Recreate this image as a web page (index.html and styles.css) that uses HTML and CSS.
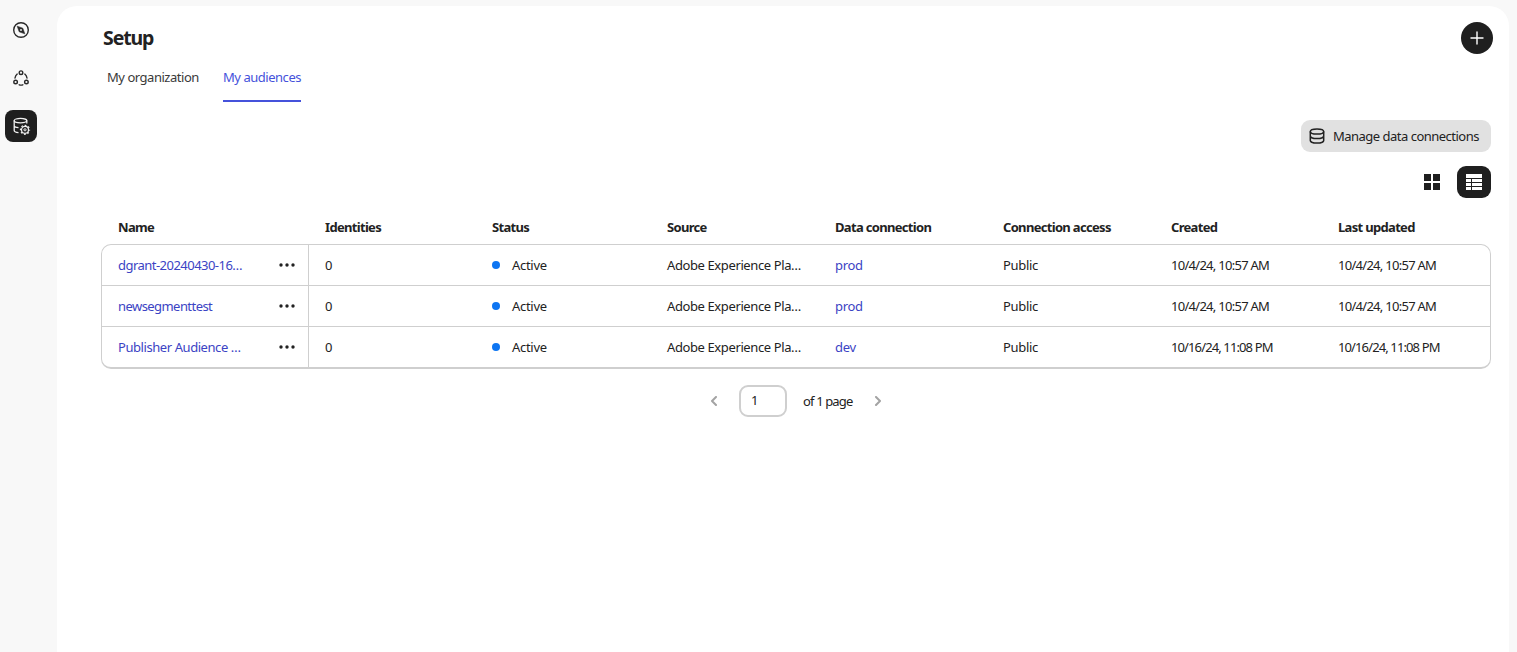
FILE: index.html
```html
<!DOCTYPE html>
<html lang="en">
<head>
<meta charset="utf-8">
<title>Setup</title>
<link rel="stylesheet" href="styles.css">
</head>
<body>
<div class="app">
  <nav class="rail">
    <a class="rail-item"><svg width="18" height="18" viewBox="0 0 18 18" fill="none" stroke="#292929" stroke-width="1.4"><circle cx="9" cy="9" r="7.3"/><path d="M5.2 5.2l5.6 2 2 5.6-5.6-2z" fill="#292929" stroke-width=".6" stroke-linejoin="round"/><circle cx="9" cy="9" r=".9" fill="#f8f8f8" stroke="none"/></svg></a>
    <a class="rail-item"><svg width="18" height="18" viewBox="0 0 18 18" fill="none" stroke="#292929" stroke-width="1.4" stroke-linecap="round"><circle cx="9" cy="3.7" r="1.8"/><circle cx="3.6" cy="13" r="1.8"/><circle cx="14.4" cy="13" r="1.8"/><path d="M5.2 5.1Q3.4 6.7 3 9M12.8 5.1Q14.6 6.7 15 9M7.2 15.8Q9 16.4 10.8 15.8"/></svg></a>
    <a class="rail-item rail-active"><svg width="20" height="20" viewBox="0 0 20 20" fill="none" stroke="#f0f0f0" stroke-width="1.3"><ellipse cx="9.500" cy="4.600" rx="6.300" ry="2.200"/><path d="M3.200 4.600v10c0 1.100 1.800 1.900 4.300 2.100M15.800 4.600V7.500M3.200 9.500c0 1.200 1.800 2 4.300 2.100"/><circle cx="14" cy="13.800" r="3.500" stroke-width="1.200"/><circle cx="14" cy="13.800" r="4.500" stroke-width="1.300" stroke-dasharray="1.730 1.804" stroke-dashoffset=".865"/><circle cx="14" cy="13.800" r="1.100" stroke-width="1"/></svg></a>
  </nav>
  <main class="panel">
    <header class="head">
      <h1 class="title">Setup</h1>
      <button class="add"><svg width="14" height="14" viewBox="0 0 14 14" stroke="#fff" stroke-width="1.4" stroke-linecap="round"><path d="M7 1v12M1 7h12"/></svg></button>
    </header>
    <div class="tabs"><a class="tab tab-org">My organization</a><a class="tab tab-active">My audiences</a></div>
    <div class="actions"><button class="manage"><svg width="16" height="16" viewBox="0 0 16 16" fill="none" stroke="#222" stroke-width="1.5"><ellipse cx="8" cy="3.5" rx="6.7" ry="2.6"/><path d="M1.3 3.5v9c0 1.4 3 2.6 6.7 2.6s6.7-1.2 6.7-2.6v-9M1.3 8c0 1.4 3 2.6 6.7 2.6S14.7 9.400 14.700 8"/></svg><span>Manage data connections</span></button></div>
    <div class="views">
      <button class="view"><svg width="16" height="16" fill="#1f1f1f"><path d="M0 0h7v7H0zM9 0h7v7H9zM0 9h7v7H0zM9 9h7v7H9z"/></svg></button>
      <button class="view view-active"><svg width="16" height="16" fill="#fff"><path d="M0 0h16v4H0zM0 5h5v3H0zM6 5h10v3H6zM0 9h5v3H0zM6 9h10v3H6zM0 13h5v3H0zM6 13h10v3H6z"/></svg></button>
    </div>
    <section class="table">
      <div class="row labels"><div class="c">Name</div><div class="c">Identities</div><div class="c">Status</div><div class="c">Source</div><div class="c">Data connection</div><div class="c">Connection access</div><div class="c">Created</div><div class="c">Last updated</div></div>
      <div class="body">
        <div class="row"><div class="c name"><a class="link dg">dgrant-20240430-16…</a><svg class="more" width="16" height="4"><circle cx="2" cy="2" r="1.7"/><circle cx="8" cy="2" r="1.7"/><circle cx="14" cy="2" r="1.7"/></svg></div><div class="c">0</div><div class="c status"><i class="dot"></i>Active</div><div class="c source">Adobe Experience Pla…</div><div class="c"><a class="link">prod</a></div><div class="c">Public</div><div class="c date">10/4/24, 10:57 AM</div><div class="c date">10/4/24, 10:57 AM</div></div>
        <div class="row"><div class="c name"><a class="link ns">newsegmenttest</a><svg class="more" width="16" height="4"><circle cx="2" cy="2" r="1.7"/><circle cx="8" cy="2" r="1.7"/><circle cx="14" cy="2" r="1.7"/></svg></div><div class="c">0</div><div class="c status"><i class="dot"></i>Active</div><div class="c source">Adobe Experience Pla…</div><div class="c"><a class="link">prod</a></div><div class="c">Public</div><div class="c date">10/4/24, 10:57 AM</div><div class="c date">10/4/24, 10:57 AM</div></div>
        <div class="row"><div class="c name"><a class="link pa">Publisher Audience …</a><svg class="more" width="16" height="4"><circle cx="2" cy="2" r="1.7"/><circle cx="8" cy="2" r="1.7"/><circle cx="14" cy="2" r="1.7"/></svg></div><div class="c">0</div><div class="c status"><i class="dot"></i>Active</div><div class="c source">Adobe Experience Pla…</div><div class="c"><a class="link">dev</a></div><div class="c">Public</div><div class="c date long">10/16/24, 11:08 PM</div><div class="c date long">10/16/24, 11:08 PM</div></div>
      </div>
    </section>
    <div class="pager"><svg width="8" height="10" viewBox="0 0 8 10" fill="none" stroke="#a3a3a3" stroke-width="2" stroke-linecap="round" stroke-linejoin="round"><path d="M6 1L2 5l4 4"/></svg><div class="page">1</div><span class="of">of 1 page</span><svg width="8" height="10" viewBox="0 0 8 10" fill="none" stroke="#a3a3a3" stroke-width="2" stroke-linecap="round" stroke-linejoin="round"><path d="M2 1l4 4-4 4"/></svg></div>
  </main>
</div>
</body>
</html>
```
FILE: styles.css
```css
* { box-sizing: border-box; }
body { margin: 0; background: #f8f8f8; color: #222; font: 13px/18px "Noto Sans", sans-serif; letter-spacing: -.3px; overflow: hidden; }
button { font: inherit; letter-spacing: inherit; color: inherit; border: 0; padding: 0; background: none; display: flex; align-items: center; justify-content: center; }
svg { display: block; flex: none; }
.app { display: flex; height: 652px; padding: 6px 8px 0 5px; }
.rail { width: 52px; padding-top: 8px; display: flex; flex-direction: column; gap: 16px; flex: none; }
.rail-item { width: 32px; height: 32px; border-radius: 8px; display: flex; align-items: center; justify-content: center; }
.rail-active { background: #1f1f1f; }
.panel { flex: 1; background: #fff; border-radius: 20px 20px 0 0; padding: 16px 18px 0 44px; }
.head { display: flex; justify-content: space-between; height: 32px; padding-left: 2px; margin-right: -2px; }
.title { margin: 0; font-size: 19.5px; line-height: 32px; font-weight: 700; letter-spacing: -1.1px; }
.add { width: 32px; height: 32px; border-radius: 50%; background: #1f1f1f; }
.tabs { display: flex; gap: 24px; height: 48px; padding-left: 6px; }
.tab { height: 48px; padding-top: 14px; white-space: nowrap; color: #3a3a3a; width: 92px; letter-spacing: -.47px; }
.tab-active { width: 78px; color: #4552db; border-bottom: 2px solid #4552db; }
.actions { display: flex; justify-content: flex-end; margin-top: 18px; }
.manage { width: 190px; height: 32px; border-radius: 9px; background: #e1e1e1; justify-content: flex-start; gap: 8px; padding-left: 8px; white-space: nowrap; letter-spacing: -.51px; }
.views { display: flex; justify-content: flex-end; gap: 8px; margin-top: 14px; }
.view { width: 34px; height: 32px; border-radius: 9px; }
.view-active { background: #1f1f1f; }
.table { margin-top: 12px; }
.row { display: grid; grid-template-columns: 207px 167px 175px 168px 168px 168px 167px 168px; }
.c { padding-left: 16px; display: flex; align-items: center; white-space: nowrap; }
.labels { height: 34px; padding: 0 1px; font-weight: 700; letter-spacing: -.68px; }
.body { border: 1px solid #cfcfcf; border-bottom-width: 2px; border-radius: 10px; }
.body .row { height: 41px; border-bottom: 1px solid #cfcfcf; }
.body .row:last-child { height: 40px; border-bottom: 0; }
.body .name { border-right: 1px solid #cfcfcf; justify-content: space-between; padding-right: 13px; }
.link { color: #3b43c4; }
.dg { letter-spacing: -.53px; }
.ns { letter-spacing: -.56px; }
.pa { letter-spacing: -.43px; }
.source { letter-spacing: -.39px; }
.date { letter-spacing: -.72px; }
.long { letter-spacing: -.88px; }
.more { fill: #222; }
.dot { width: 8px; height: 8px; border-radius: 50%; background: #0d75f2; margin-right: 12px; }
.pager { display: flex; align-items: center; justify-content: center; height: 32px; margin-top: 16px; }
.page { width: 48px; height: 32px; border: 2px solid #cfcfcf; border-radius: 9px; margin: 0 16px 0 21px; padding: 4px 0 0 10px; }
.of { width: 50px; margin-right: 21px; white-space: nowrap; letter-spacing: -.86px; }
```
